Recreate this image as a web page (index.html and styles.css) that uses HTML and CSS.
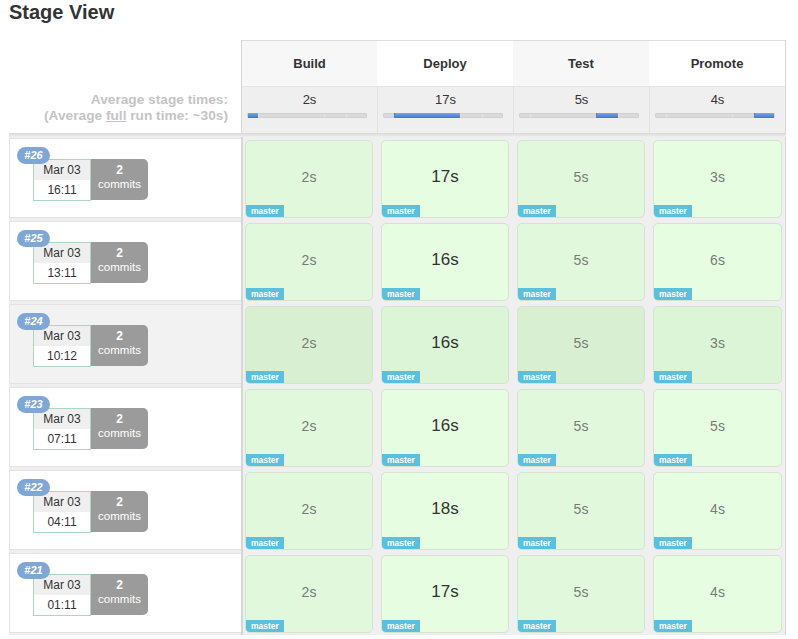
FILE: index.html
```html
<!DOCTYPE html>
<html>
<head>
<meta charset="utf-8">
<title>Stage View</title>
<link rel="stylesheet" href="styles.css">
</head>
<body>
<div class="page">
  <h1 class="title">Stage View</h1>
  <div class="stage-table">
    <div class="row head">
      <div class="corner"></div>
      <div class="stage-head odd first">Build</div>
      <div class="stage-head even">Deploy</div>
      <div class="stage-head odd">Test</div>
      <div class="stage-head even last">Promote</div>
    </div>
    <div class="row avg">
      <div class="avg-label">Average stage times:<br>(Average <u>full</u> run time: ~30s)</div>
      <div class="avg-cell first">
        <div class="avg-time">2s</div>
        <div class="track"><span class="seg seg1 on"></span><span class="seg seg2"></span><span class="seg seg3"></span><span class="seg seg4"></span></div>
      </div>
      <div class="avg-cell">
        <div class="avg-time">17s</div>
        <div class="track"><span class="seg seg1"></span><span class="seg seg2 on"></span><span class="seg seg3"></span><span class="seg seg4"></span></div>
      </div>
      <div class="avg-cell">
        <div class="avg-time">5s</div>
        <div class="track"><span class="seg seg1"></span><span class="seg seg2"></span><span class="seg seg3 on"></span><span class="seg seg4"></span></div>
      </div>
      <div class="avg-cell last">
        <div class="avg-time">4s</div>
        <div class="track"><span class="seg seg1"></span><span class="seg seg2"></span><span class="seg seg3"></span><span class="seg seg4 on"></span></div>
      </div>
    </div>
    <div class="divider"></div>

    <div class="row run">
      <div class="run-info"><div class="run-card"><span class="run-badge">#26</span><div class="date-box"><div class="date">Mar 03</div><div class="time">16:11</div></div><div class="commits"><b>2</b><span>commits</span></div></div></div>
      <div class="stage-col first"><div class="cell odd"><div class="dur">2s</div><span class="branch">master</span></div></div>
      <div class="stage-col"><div class="cell even"><div class="dur long">17s</div><span class="branch">master</span></div></div>
      <div class="stage-col"><div class="cell odd"><div class="dur">5s</div><span class="branch">master</span></div></div>
      <div class="stage-col last"><div class="cell even"><div class="dur">3s</div><span class="branch">master</span></div></div>
    </div>

    <div class="row run">
      <div class="run-info"><div class="run-card"><span class="run-badge">#25</span><div class="date-box"><div class="date">Mar 03</div><div class="time">13:11</div></div><div class="commits"><b>2</b><span>commits</span></div></div></div>
      <div class="stage-col first"><div class="cell odd"><div class="dur">2s</div><span class="branch">master</span></div></div>
      <div class="stage-col"><div class="cell even"><div class="dur long">16s</div><span class="branch">master</span></div></div>
      <div class="stage-col"><div class="cell odd"><div class="dur">5s</div><span class="branch">master</span></div></div>
      <div class="stage-col last"><div class="cell even"><div class="dur">6s</div><span class="branch">master</span></div></div>
    </div>

    <div class="row run hover">
      <div class="run-info"><div class="run-card"><span class="run-badge">#24</span><div class="date-box"><div class="date">Mar 03</div><div class="time">10:12</div></div><div class="commits"><b>2</b><span>commits</span></div></div></div>
      <div class="stage-col first"><div class="cell odd"><div class="dur">2s</div><span class="branch">master</span></div></div>
      <div class="stage-col"><div class="cell even"><div class="dur long">16s</div><span class="branch">master</span></div></div>
      <div class="stage-col"><div class="cell odd"><div class="dur">5s</div><span class="branch">master</span></div></div>
      <div class="stage-col last"><div class="cell even"><div class="dur">3s</div><span class="branch">master</span></div></div>
    </div>

    <div class="row run">
      <div class="run-info"><div class="run-card"><span class="run-badge">#23</span><div class="date-box"><div class="date">Mar 03</div><div class="time">07:11</div></div><div class="commits"><b>2</b><span>commits</span></div></div></div>
      <div class="stage-col first"><div class="cell odd"><div class="dur">2s</div><span class="branch">master</span></div></div>
      <div class="stage-col"><div class="cell even"><div class="dur long">16s</div><span class="branch">master</span></div></div>
      <div class="stage-col"><div class="cell odd"><div class="dur">5s</div><span class="branch">master</span></div></div>
      <div class="stage-col last"><div class="cell even"><div class="dur">5s</div><span class="branch">master</span></div></div>
    </div>

    <div class="row run">
      <div class="run-info"><div class="run-card"><span class="run-badge">#22</span><div class="date-box"><div class="date">Mar 03</div><div class="time">04:11</div></div><div class="commits"><b>2</b><span>commits</span></div></div></div>
      <div class="stage-col first"><div class="cell odd"><div class="dur">2s</div><span class="branch">master</span></div></div>
      <div class="stage-col"><div class="cell even"><div class="dur long">18s</div><span class="branch">master</span></div></div>
      <div class="stage-col"><div class="cell odd"><div class="dur">5s</div><span class="branch">master</span></div></div>
      <div class="stage-col last"><div class="cell even"><div class="dur">4s</div><span class="branch">master</span></div></div>
    </div>

    <div class="row run">
      <div class="run-info"><div class="run-card"><span class="run-badge">#21</span><div class="date-box"><div class="date">Mar 03</div><div class="time">01:11</div></div><div class="commits"><b>2</b><span>commits</span></div></div></div>
      <div class="stage-col first"><div class="cell odd"><div class="dur">2s</div><span class="branch">master</span></div></div>
      <div class="stage-col"><div class="cell even"><div class="dur long">17s</div><span class="branch">master</span></div></div>
      <div class="stage-col"><div class="cell odd"><div class="dur">5s</div><span class="branch">master</span></div></div>
      <div class="stage-col last"><div class="cell even"><div class="dur">4s</div><span class="branch">master</span></div></div>
    </div>
  </div>
</div>
</body>
</html>
```

FILE: styles.css
```css
* { box-sizing: border-box; }

body {
  margin: 0;
  background: #fff;
  color: #333;
  font-family: "Liberation Sans", Arial, Helvetica, sans-serif;
}

.page {
  padding-left: 9px;
}

.title {
  margin: 0;
  font-size: 20px;
  line-height: 24px;
  font-weight: bold;
  color: #333;
}

.stage-table {
  margin-top: 16px;
  width: 777px;
}

.row {
  display: grid;
  grid-template-columns: 232px 136px 136px 136px 137px;
}

/* header */
.head {
  height: 46px;
}

.stage-head {
  border-top: 1px solid #dcdcdc;
  display: flex;
  align-items: center;
  justify-content: center;
  font-size: 13px;
  font-weight: bold;
  color: #333;
  padding-bottom: 1px;
}

.stage-head.odd { background: #f7f7f7; }
.stage-head.even { background: #fff; }
.stage-head.first { border-left: 1px solid #d6d6d6; }
.stage-head.last { border-right: 1px solid #d6d6d6; }

/* averages */
.avg {
  height: 47px;
}

.avg-label {
  text-align: right;
  padding: 6px 13px 0 0;
  font-size: 13.7px;
  line-height: 16px;
  font-weight: bold;
  color: #c4c4c4;
  white-space: nowrap;
}

.avg-label u {
  text-decoration: underline;
}

.avg-cell {
  background: #efefef;
  border-top: 1px solid #e4e4e4;
  border-left: 1px solid #e2e2e2;
  padding-top: 5px;
}

.avg-cell.first { border-left: 1px solid #d6d6d6; }
.avg-cell.last { border-right: 1px solid #d6d6d6; }

.avg-time {
  text-align: center;
  font-size: 13px;
  line-height: 16px;
  color: #333;
}

.track {
  display: flex;
  height: 5px;
  margin: 5px 10px 0 5px;
  background: #dadada;
  border: 1px solid #d2d2d2;
  border-radius: 1px;
}

.seg {
  display: block;
  height: 100%;
  border-left: 1px solid #e6e6e6;
}

.seg1 { flex: 10; border-left: 0; }
.seg2 { flex: 68; }
.seg3 { flex: 22; }
.seg4 { flex: 20; }

.seg.on {
  background: linear-gradient(#7aa6e6, #3f78d0);
  border-left-color: #4a80d4;
  margin: -1px 0;
  height: 5px;
}

.divider {
  height: 4px;
  background: linear-gradient(#d8d8d8, #f0f0f0);
}

/* runs */
.run {
  height: 83px;
  background: #efefef;
}

.run-info {
  margin: 1px 0 2px 0;
  background: #fff;
  border: 1px solid #e3e3e3;
  border-right: 0;
  padding: 20px 0 0 23px;
}

.run.hover .run-info {
  background: #f2f2f2;
}

.run-card {
  position: relative;
  display: inline-flex;
}

.run-badge {
  position: absolute;
  left: -16px;
  top: -12px;
  z-index: 2;
  width: 33px;
  height: 17px;
  border-radius: 9px;
  background: #7fa7d6;
  color: #fff;
  font-size: 11px;
  font-weight: bold;
  font-style: italic;
  line-height: 17px;
  text-align: center;
}

.date-box {
  width: 58px;
  height: 42px;
  border: 1px solid #acd6bd;
  background: #fff;
  font-size: 12px;
  color: #333;
  text-align: center;
}

.date {
  height: 20px;
  line-height: 20px;
  background: #efefef;
}

.time {
  height: 20px;
  line-height: 21px;
}

.commits {
  width: 57px;
  height: 41px;
  background: #9b9b9b;
  border-radius: 0 5px 5px 0;
  color: #fff;
  display: flex;
  flex-direction: column;
  align-items: center;
  padding-top: 4px;
  font-size: 11.5px;
  line-height: 14px;
}

.commits b {
  font-size: 12px;
}

.stage-col {
  padding: 3px 4px 2px 4px;
}

.stage-col.first {
  box-shadow: inset 2px 0 0 #d6d6d6;
}

.stage-col.last {
  box-shadow: inset -1px 0 0 #d6d6d6;
}

.cell {
  height: 100%;
  border: 1px solid #d5e3d0;
  border-radius: 5px;
  display: flex;
  flex-direction: column;
  overflow: hidden;
}

.cell.odd { background: #e1f8dc; }
.cell.even { background: #e6fde1; }
.run.hover .cell.odd { background: #d8efd2; }
.run.hover .cell.even { background: #dcf5d6; }

.dur {
  flex: 1;
  display: flex;
  align-items: center;
  justify-content: center;
  padding-top: 8px;
  font-size: 14px;
  color: #7a7a7a;
}

.dur.long {
  font-size: 17px;
  color: #333;
}

.branch {
  align-self: flex-start;
  height: 12px;
  padding: 0 5px;
  background: #5bc0de;
  color: #fff;
  font-size: 8.5px;
  font-weight: bold;
  line-height: 12px;
}
```
